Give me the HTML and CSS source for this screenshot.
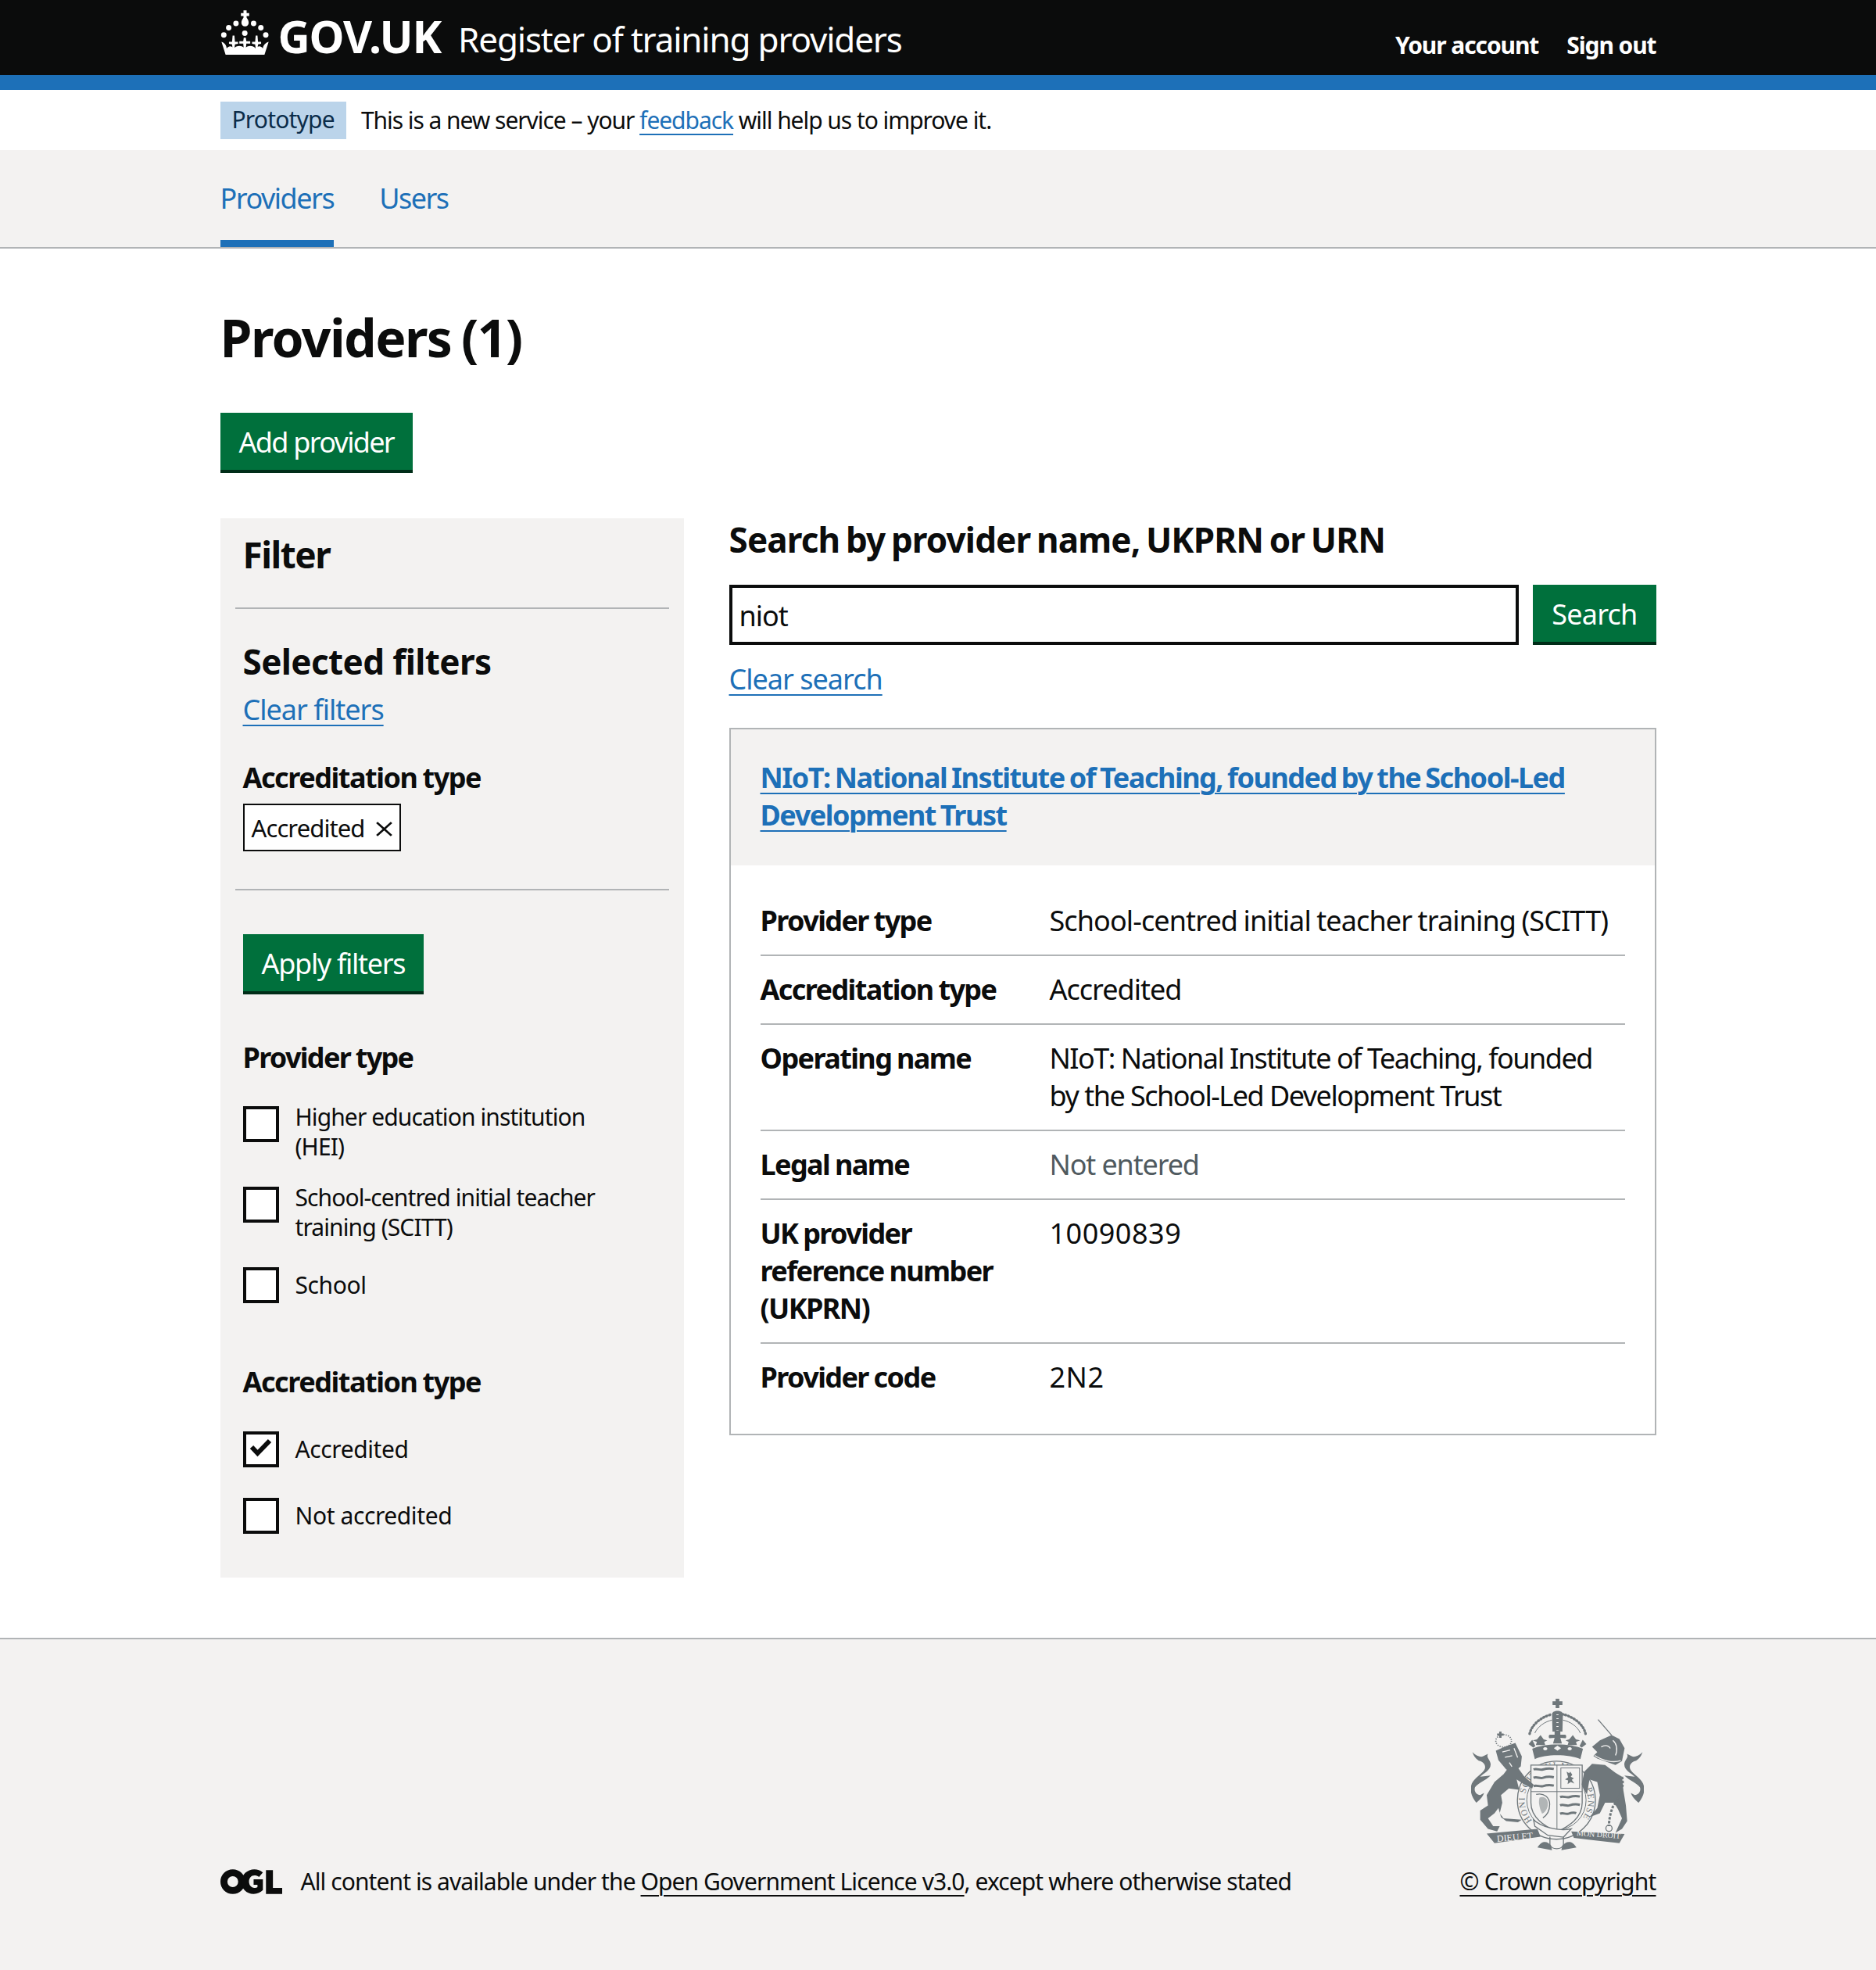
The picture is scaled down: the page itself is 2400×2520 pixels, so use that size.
FILE: index.html
```html
<!DOCTYPE html>
<html lang="en">
<head>
<meta charset="utf-8">
<title>Providers (1) - Register of training providers</title>
<link rel="stylesheet" href="styles.css">
</head>
<body>
<header class="header">
  <div class="wrap header-inner">
    <a class="logo" href="#">
      <svg class="crown" viewBox="30 22 190 176" aria-hidden="true"><g fill="#fff"><path d="M119 25h12v10h10v12h-10v6c6 8 8 14 8 20 0 8-6 14-14 14s-14-6-14-14c0-6 2-12 8-20v-6h-10V35h10z"/><circle cx="90" cy="75" r="10.500"/><circle cx="158" cy="75" r="10.500"/><circle cx="62" cy="92" r="10.500"/><circle cx="186" cy="92" r="10.500"/><circle cx="43" cy="120" r="10.500"/><circle cx="205" cy="120" r="10.500"/><circle cx="124" cy="113" r="10.500"/><path d="M34 146c12 4 20 14 20 26 8-10 18-12 28 0 10-12 30-14 42 0 12-14 32-12 42 0 10-12 20-10 28 0 0-12 10-22 22-26l-16 50H50z"/><path d="M77 122h7l2 24h12v8l-12 2-2 18h-7l-2-18-12-2v-8h12zM120 130h8l2 14h15v9h-15l-2 20h-8l-2-20h-15v-9h15zM166 122h7l2 24h12v8l-12 2-2 18h-7l-2-18-12-2v-8h12z"/></g></svg>
      <span class="logo-text">GOV.UK</span>
    </a>
    <a class="service-name" href="#">Register of training providers</a>
    <nav class="header-nav"><a href="#">Your account</a><a href="#">Sign out</a></nav>
  </div>
</header>
<div class="header-rule"></div>
<div class="wrap phase">
  <strong class="phase-tag">Prototype</strong>
  <span>This is a new service – your <a class="link" href="#">feedback</a> will help us to improve it.</span>
</div>
<nav class="primary-nav">
  <div class="wrap primary-inner">
    <a class="primary-item current" href="#">Providers</a>
    <a class="primary-item" href="#">Users</a>
  </div>
</nav>
<main class="wrap main">
  <h1 class="title">Providers (1)</h1>
  <a class="button add" href="#">Add provider</a>
  <div class="columns">
    <aside class="filter">
      <h2 class="filter-title">Filter</h2>
      <div class="selected">
        <h2 class="selected-title">Selected filters</h2>
        <a class="link clear-filters" href="#">Clear filters</a>
        <h3 class="group-title">Accreditation type</h3>
        <a class="chip" href="#">Accredited <svg class="chip-x" viewBox="0 0 18 18" preserveAspectRatio="none" aria-hidden="true"><path d="M1 1l16 16M17 1L1 17" stroke="#0b0c0c" stroke-width="2.400" fill="none"/></svg></a>
      </div>
      <div class="options">
        <a class="button apply" href="#">Apply filters</a>
        <h3 class="legend">Provider type</h3>
        <div class="check two"><span class="box"></span><span class="check-label">Higher education institution<br>(HEI)</span></div>
        <div class="check two"><span class="box"></span><span class="check-label">School-centred initial teacher<br>training (SCITT)</span></div>
        <div class="check"><span class="box"></span><span class="check-label">School</span></div>
        <h3 class="legend second">Accreditation type</h3>
        <div class="check"><span class="box"><svg viewBox="0 0 38 38" aria-hidden="true"><path d="M7 16l7.500 8L30 8" stroke="#0b0c0c" stroke-width="6" fill="none"/></svg></span><span class="check-label">Accredited</span></div>
        <div class="check"><span class="box"></span><span class="check-label">Not accredited</span></div>
      </div>
    </aside>
    <section class="results">
      <h2 class="search-title">Search by provider name, UKPRN or URN</h2>
      <div class="search-row">
        <div class="search-input">niot</div>
        <a class="button search" href="#">Search</a>
      </div>
      <a class="link clear-search" href="#">Clear search</a>
      <article class="card">
        <div class="card-head"><a class="link card-link" href="#">NIoT: National Institute of Teaching, founded by the School-Led Development Trust</a></div>
        <dl class="summary">
          <div class="row"><dt>Provider type</dt><dd class="wide">School-centred initial teacher training (SCITT)</dd></div>
          <div class="row"><dt>Accreditation type</dt><dd>Accredited</dd></div>
          <div class="row"><dt>Operating name</dt><dd class="tight">NIoT: National Institute of Teaching, founded by the School-Led Development Trust</dd></div>
          <div class="row"><dt>Legal name</dt><dd class="muted">Not entered</dd></div>
          <div class="row"><dt>UK provider reference number (UKPRN)</dt><dd class="num">10090839</dd></div>
          <div class="row last"><dt>Provider code</dt><dd class="num">2N2</dd></div>
        </dl>
      </article>
    </section>
  </div>
</main>
<footer class="footer">
  <div class="wrap footer-inner">
    <div class="licence">
      <svg class="ogl" viewBox="0 0 80 32" aria-hidden="true"><g fill="#0b0c0c"><path fill-rule="evenodd" d="M16 0a16 16 0 1 1 0 32a16 16 0 0 1 0-32zm0 9a7 7 0 1 0 0 14a7 7 0 0 0 0-14z"/><path d="M44 0c4 0 8 1.500 11 4l-5 6c-2-1.500-3.500-2-6-2-4 0-7 3.500-7 8s3 8 7 8c1.500 0 3-.4 4-1v-3h-5v-7h12v14c-3 3-7 5-12 5-9 0-16-7-16-16S35 0 44 0z"/><path d="M59 1h9v23h12v8H59z"/></g></svg>
      <span>All content is available under the <a class="footer-link" href="#">Open Government Licence v3.0</a>, except where otherwise stated</span>
    </div>
    <div class="crest-block">
      <svg class="crest" viewBox="405 98 664 590" aria-hidden="true">
        <defs>
          <path id="garter-arc" d="M640 568A122 122 0 1 1 826 568"/>
          <path id="mantle" d="M410 305C425 320 440 325 450 322L470 312C462 325 478 335 480 350C482 375 455 385 440 400L480 395C460 415 430 425 420 440C415 455 425 470 440 470L455 462C448 482 435 490 425 500C410 480 400 460 405 435C410 410 440 395 455 375C465 360 455 345 440 340C425 335 415 320 410 305Z"/>
        </defs>
        <g class="crest-ink">
          <use href="#mantle"/>
          <use href="#mantle" transform="translate(1474 0) scale(-1 1)"/>
          <!-- garter -->
          <circle class="crest-line" cx="733" cy="490" r="150"/>
          <circle class="crest-line thin" cx="733" cy="490" r="114"/>
          <text class="crest-garter"><textPath href="#garter-arc" textLength="540">HONI SOIT QUI MAL Y PENSE</textPath></text>
          <!-- imperial crown -->
          <path d="M730 100h14v10h12v14h-12v12h-14v-12h-12v-14h12z"/>
          <path d="M718 226l-2-66c0-18 42-18 42 0l-2 66z"/>
          <path class="crest-dots" d="M737 160V222"/>
          <path class="crest-arch" d="M630 235C640 190 690 165 716 160M845 235C835 190 785 165 758 160"/>
          <path class="crest-line thin" d="M650 232C662 205 690 188 716 182M825 232C813 205 785 188 758 182"/>
          <path d="M726 224h22v14h18c6 0 6 14 0 14l-18-2 6 22h-34l6-22-18 2c-6 0-6-14 0-14h18zM672 240l12 16 14 4-12 6 4 12h-36l4-12-16-6 16-4zM796 240l12 16 16 4-16 6 4 12h-36l4-12-12-6 14-4zM640 258l12 24-8 6-18-14zM834 258l14 16-18 14-8-6z"/>
          <path d="M640 292C690 270 785 270 835 292L825 332C780 312 690 312 650 332Z"/>
          <path class="crest-cut" d="M737 280l14 10-14 10-14-10zM690 286a8 6 0 1 0 .1 0zM784 286a8 6 0 1 0 .1 0z"/>
          <!-- shield -->
          <path class="crest-shield" d="M635 355H832V500C832 560 780 590 735 612C690 590 635 560 635 500Z"/>
          <path class="crest-line thin" d="M735 355V612M635 457H832"/>
          <path class="crest-stripe" d="M645 372c12-6 24 4 36 0s26-6 42-2M645 404c12-6 24 4 36 0s26-6 42-2M645 436c12-6 24 4 36 0s26-6 42-2M747 478c12-6 24 4 36 0s26-6 40-2M747 510c12-6 24 4 36 0s26-6 40-2M747 542c12-6 20 4 32 0s20-6 30-2"/>
          <rect class="crest-line thin" x="750" y="366" width="72" height="78"/>
          <path d="M772 380l10 6 4-6 8 12-6 8 12 6-8 6 10 14-14-6-12 8 2-14-12-4 12-8z"/>
          <path class="crest-hatch" d="M668 480c20-8 32 6 32 24s-10 32-22 38c-8-18-16-40-10-62z"/>
          <path class="crest-line" d="M655 468c30-8 52 12 52 38 0 22-10 42-26 52"/>
          <!-- lion -->
          <ellipse class="crest-line dotted" cx="530" cy="262" rx="30" ry="24"/>
          <path d="M513 226h9v8h8v8h-8v8h-9v-8h-8v-8h8z"/>
          <path d="M500 300L530 286L575 270L600 322L596 360L570 382L540 372L510 336Z"/>
          <path class="crest-cut-line" d="M525 305l30-8M535 325l28-6M552 345l10 16M570 290l14 36"/>
          <path d="M545 370L585 365L610 400L645 430L640 445L610 430L580 410L590 450L550 445L520 470L525 500L515 540L530 560L600 565L585 575L540 570L520 555L510 520L495 540L470 560L490 590L515 590L505 610L470 600L440 565L440 530L470 510L465 470L495 420L530 390Z"/>
          <!-- unicorn -->
          <path class="crest-line" d="M893 180L945 240"/>
          <path d="M870 285L900 260L945 240L975 255L995 290L985 340L960 355L890 330L875 320L890 305Z"/>
          <path class="crest-cut-line" d="M905 285c15-8 30-6 35 6M950 260c14 12 20 34 10 58M880 318c30 20 70 30 100 20"/>
          <path d="M870 350L920 355L960 385L985 400L990 450L1000 510L1005 570L985 600L960 615L985 560L970 525L955 500L920 500L900 540L860 555L890 520L900 470L890 420L860 410L850 470L860 480L845 460L830 430L840 380Z"/>
          <path class="crest-chain" d="M985 400C995 440 975 480 950 515C940 540 935 565 935 590"/>
          <circle class="crest-line" cx="935" cy="598" r="12"/>
          <!-- mottoes -->
          <path d="M465 618L660 600L672 630L495 655Z"/>
          <path d="M790 610L995 620L975 655L800 635Z"/>
          <text class="crest-motto" transform="translate(505 650) rotate(-5)">DIEU ET</text>
          <text class="crest-motto small" transform="translate(810 626) rotate(4)">MON DROIT</text>
          <path class="crest-shield" d="M645 565C670 590 740 612 790 600L760 632L700 625L650 590Z"/>
          <path d="M660 672C680 640 700 650 712 664L716 682ZM810 672C790 640 770 650 756 664L752 682Z"/>
          <path class="crest-line" d="M708 630V660C712 682 756 682 760 660V630"/>
        </g>
      </svg>
      <a class="footer-link" href="#">© Crown copyright</a>
    </div>
  </div>
</footer>
</body>
</html>
```

FILE: styles.css
```css
* { box-sizing: border-box; }
html, body { margin: 0; padding: 0; }
body { font-family: "Noto Sans", sans-serif; font-size: 36px; line-height: 48px; color: #0b0c0c; background: #fff; letter-spacing: -1px; }
a { color: inherit; text-decoration: none; }
h1, h2, h3, dl, dd { margin: 0; }
.wrap { width: 1837px; margin: 0 auto; }
.link { color: #1d70b8; text-decoration: underline; text-decoration-thickness: 2px; text-underline-offset: 6px; }

.header { background: #0b0c0c; color: #fff; height: 96px; }
.header-inner { display: flex; align-items: flex-start; height: 96px; }
.logo { display: flex; align-items: center; height: 96px; margin-right: 22px; }
.crown { width: 63px; height: 59px; margin-right: 11px; margin-bottom: 13px; }
.logo-text { font-size: 57px; font-weight: 700; letter-spacing: -1.2px; line-height: 96px; margin-top: -4px; }
.service-name { font-size: 44px; line-height: 96px; font-weight: 400; letter-spacing: -1.2px; margin-top: 2px; }
.header-nav { margin-left: auto; display: flex; gap: 36px; font-size: 30px; font-weight: 700; line-height: 96px; margin-top: 10px; letter-spacing: -1.1px; }
.header-rule { height: 19px; background: #1d70b8; }

.phase { display: flex; align-items: center; gap: 19px; height: 77px; font-size: 30px; letter-spacing: -1.05px; }
.phase-tag { background: #bbd4ea; color: #0c2d4a; font-weight: 400; height: 48px; line-height: 46px; padding: 0 15px; letter-spacing: -0.8px; }

.primary-nav { background: #f3f2f1; border-bottom: 2px solid #b1b4b6; height: 126px; }
.primary-inner { display: flex; gap: 58px; height: 124px; }
.primary-item { color: #1d70b8; height: 124px; line-height: 124px; font-size: 36px; letter-spacing: -1.5px; }
.primary-item.current { border-bottom: 9px solid #1d70b8; }

.main { padding-top: 71px; padding-bottom: 77px; }
.title { font-size: 66px; line-height: 84px; font-weight: 700; margin-bottom: 55px; letter-spacing: -1.6px; word-spacing: -3px; }

.button { display: inline-block; background: #00703c; color: #fff; height: 77px; line-height: 75px; padding: 0 24px; font-size: 36px; border-bottom: 4px solid #002d18; }
.add { letter-spacing: -1.700px; }
.apply { display: block; width: fit-content; letter-spacing: -1.300px; }
.search { letter-spacing: -0.800px; }
.columns { display: flex; gap: 58px; margin-top: 58px; align-items: flex-start; }

.filter { width: 593px; height: 1355px; background: #f3f2f1; flex: none; padding: 0 19px; }
.filter-title { font-size: 46px; line-height: 92px; font-weight: 700; padding-left: 10px; height: 116px; border-bottom: 2px solid #b1b4b6; letter-spacing: -1.500px; }
.selected { padding: 0 10px; height: 360px; border-bottom: 2px solid #b1b4b6; }
.selected-title { font-size: 44px; line-height: 56px; font-weight: 700; padding-top: 39px; letter-spacing: -0.600px; }
.clear-filters { display: inline-block; margin-top: 10px; }
.group-title { font-size: 36px; line-height: 48px; font-weight: 700; margin-top: 39px; letter-spacing: -1.450px; word-spacing: -1px; }
.chip { display: inline-flex; align-items: center; gap: 14px; background: #fff; border: 2px solid #0b0c0c; height: 61px; padding: 0 9px; font-size: 31px; margin-top: 9px; letter-spacing: -0.900px; }
.chip-x { width: 21px; height: 19px; margin-top: 4px; }
.options { padding: 56px 10px 0; }
.legend { font-size: 36px; line-height: 48px; font-weight: 700; margin-top: 57px; margin-bottom: 33px; letter-spacing: -1.700px; word-spacing: -1px; }
.legend.second { margin-top: 77px; margin-bottom: 39px; letter-spacing: -1.450px; }
.check { display: flex; gap: 21px; min-height: 46px; margin-bottom: 39px; font-size: 30px; line-height: 38px; align-items: center; letter-spacing: -0.400px; }
.check.two { align-items: flex-start; margin-bottom: 27px; letter-spacing: -0.900px; }
.check.two .box { margin-top: 5px; }
.check.two + .check:not(.two) { margin-top: 32px; }
.box { width: 46px; height: 46px; flex: none; background: #fff; border: 4px solid #0b0c0c; display: block; }
.box svg { display: block; width: 38px; height: 38px; }

.results { width: 1186px; flex: none; }
.search-title { font-size: 44px; line-height: 54px; font-weight: 700; margin-bottom: 31px; letter-spacing: -0.850px; word-spacing: -3px; }
.search-row { display: flex; gap: 18px; align-items: flex-start; }
.search-input { flex: 1; height: 77px; background: #fff; border: 4px solid #0b0c0c; line-height: 71px; padding-left: 9px; }
.clear-search { display: inline-block; margin-top: 20px; }
.card { margin-top: 38px; border: 2px solid #b1b4b6; }
.card-head { background: #f3f2f1; padding: 38px 38px 40px; }
.card-link { font-weight: 700; letter-spacing: -1.480px; word-spacing: -2px; }
.summary { padding: 47px 38px 29px; }
.row { display: flex; padding: 0 0 19px; margin-bottom: 19px; border-bottom: 2px solid #b1b4b6; }
.row.last { border-bottom: 0; margin-bottom: 0; }
.row dt { width: 370px; padding-right: 30px; flex: none; font-weight: 700; letter-spacing: -1.600px; word-spacing: -1px; }
.row dd { flex: 1; }
.row .wide { letter-spacing: -0.900px; word-spacing: -1px; }
.row .tight { letter-spacing: -1.500px; }
.row .num { letter-spacing: 0.500px; }
.row .muted { color: #505a5f; letter-spacing: -1.150px; }

.footer { background: #f3f2f1; border-top: 2px solid #b1b4b6; height: 425px; }
.footer-inner { display: flex; justify-content: space-between; align-items: flex-end; height: 334px; }
.licence { display: flex; align-items: center; gap: 24px; font-size: 30px; height: 48px; letter-spacing: -0.920px; }
.ogl { width: 79px; height: 32px; }
.footer-link { text-decoration: underline; text-decoration-thickness: 2px; text-underline-offset: 6px; }
.crest-block { display: flex; flex-direction: column; align-items: center; font-size: 30px; letter-spacing: -0.800px; }
.crest { width: 221px; height: 197px; margin-bottom: 14px; }
.crest-ink { fill: #6f777b; }
.crest-line { fill: none; stroke: #6f777b; stroke-width: 4; }
.crest-line.thin { stroke-width: 3; }
.crest-line.dotted { stroke-width: 5; stroke-dasharray: 4 5; }
.crest-shield { fill: #f3f2f1; stroke: #6f777b; stroke-width: 4; }
.crest-stripe { fill: none; stroke: #6f777b; stroke-width: 9; }
.crest-hatch { fill: #6f777b; fill-opacity: 0.5; }
.crest-cut { fill: #f3f2f1; }
.crest-cut-line { fill: none; stroke: #f3f2f1; stroke-width: 4; }
.crest-dots { fill: none; stroke: #f3f2f1; stroke-width: 8; stroke-dasharray: 3 12; }
.crest-arch { fill: none; stroke: #6f777b; stroke-width: 10; stroke-dasharray: 3 9; stroke-linecap: round; }
.crest-chain { fill: none; stroke: #6f777b; stroke-width: 9; stroke-dasharray: 10 5; }
.crest-garter { font-family: "Liberation Serif", serif; font-size: 34px; fill: #6f777b; letter-spacing: 0; }
.crest-motto { font-family: "Liberation Serif", serif; font-size: 36px; fill: #f3f2f1; letter-spacing: 0; }
.crest-motto.small { font-size: 30px; }
```
